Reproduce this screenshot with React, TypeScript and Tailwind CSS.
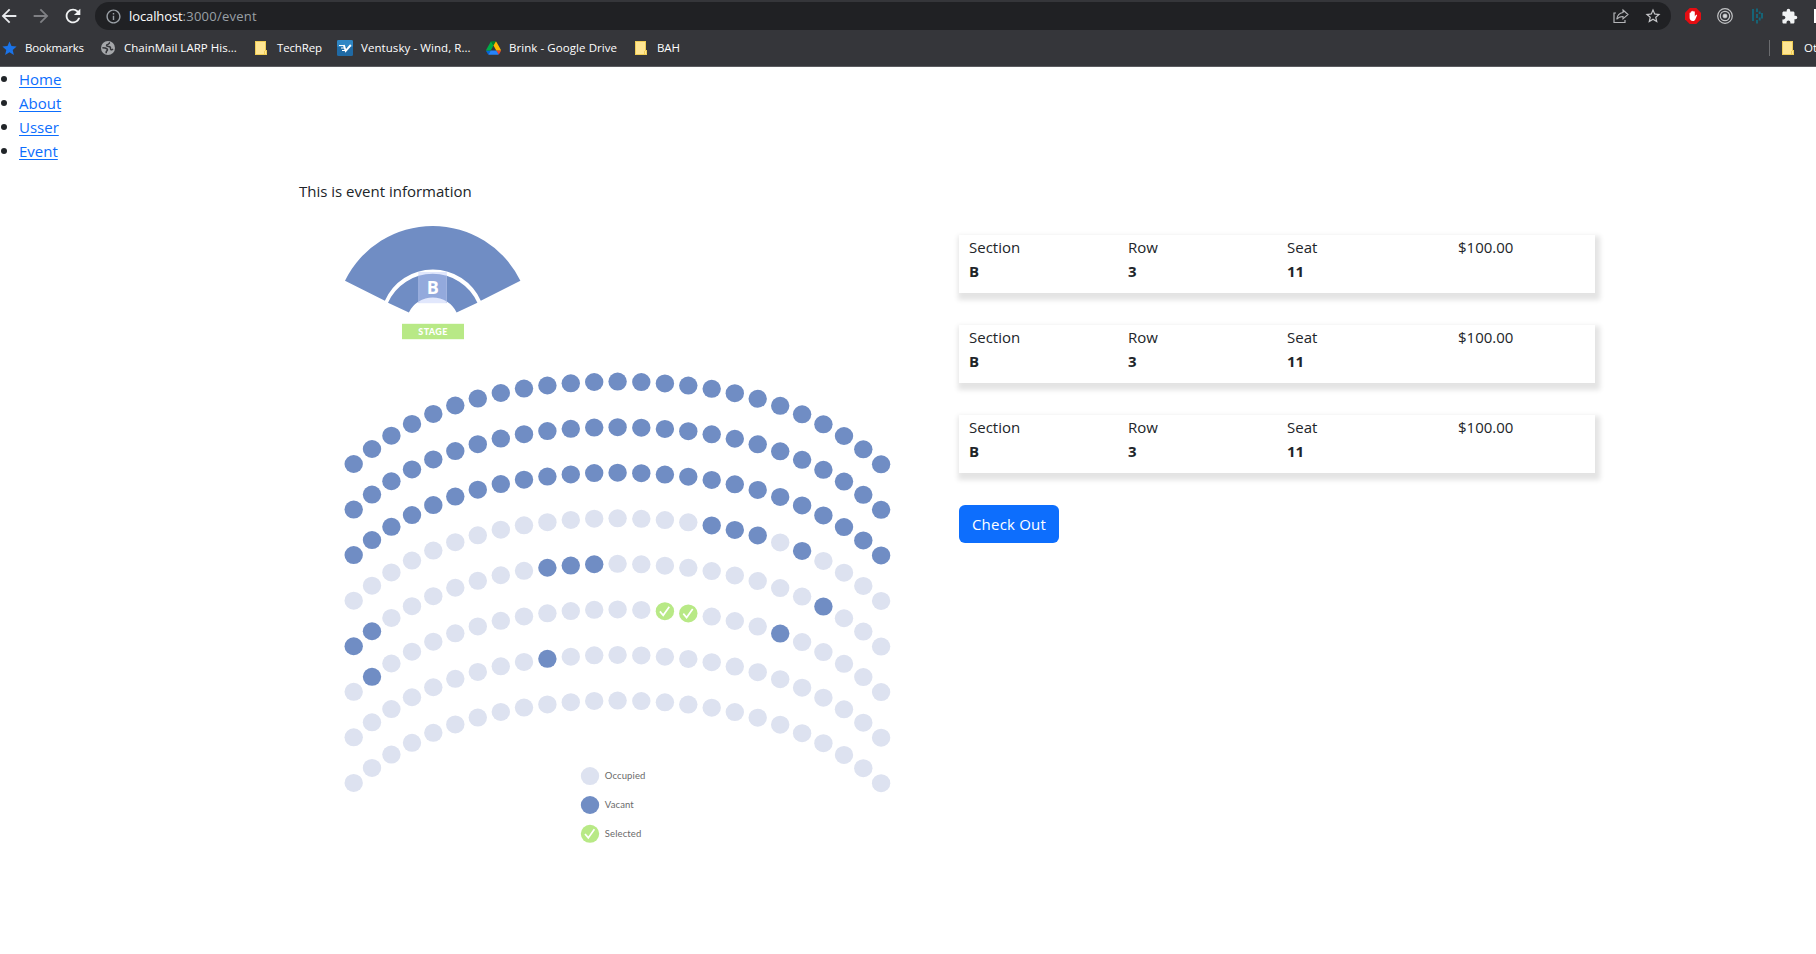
import React from "react";
import {
  MdArrowBack,
  MdArrowForward,
  MdExtension,
  MdInfoOutline,
  MdRefresh,
  MdStar,
  MdStarBorder,
} from "react-icons/md";

type SeatState = "occupied" | "vacant" | "selected";

const SEAT_X = [
  353.7, 372, 391.4, 412, 433.3, 455.3, 477.8, 500.8, 524, 547.4, 570.8, 594.2, 617.6, 641.3, 664.9,
  688.3, 711.7, 734.8, 757.7, 780.2, 802.1, 823.4, 844, 863.3, 881.1,
];
const SEAT_Y = [
  464, 449, 435.7, 423.9, 413.9, 405.5, 398.6, 393, 388.6, 385.5, 383.3, 382, 381.6, 382.1, 383.4,
  385.6, 388.8, 393.2, 398.8, 405.8, 414.3, 424.3, 436, 449.3, 464.3,
];
const ROW_STEP = 45.56;
const VACANT: Record<number, number[]> = {
  3: [16, 17, 18, 20],
  4: [0, 1, 9, 10, 11, 21],
  5: [1, 19],
  6: [9],
};
const SELECTED: Record<number, number[]> = { 5: [14, 15] };
const FILL: Record<SeatState, string> = {
  occupied: "#dde2f0",
  vacant: "#708dc4",
  selected: "#b8e986",
};

function seatState(row: number, seat: number): SeatState {
  if (row < 3 || VACANT[row]?.includes(seat)) return "vacant";
  return SELECTED[row]?.includes(seat) ? "selected" : "occupied";
}

function Seat({ x, y, state }: { x: number; y: number; state: SeatState }) {
  return (
    <g transform={`translate(${x} ${y})`}>
      <ellipse rx="9.2" ry="9" fill={FILL[state]} />
      {state === "selected" && (
        <path d="M-5 0.2 L-1.7 4.1 L4.4 -4.5" fill="none" stroke="#fff" strokeWidth="1.7" />
      )}
    </g>
  );
}

function SeatMap() {
  return (
    <svg className="block h-[640px] w-[600px]" viewBox="299 219 600 640">
      <path
        d="M345 280.8 A97.5 97.5 0 0 1 520.4 280.8 L480.8 300.7 A52.4 52.4 0 0 0 384.9 300.7 Z"
        fill="#708dc4"
      />
      <path
        d="M388 302.8 A49 49 0 0 1 477.4 302.8 L456.6 312.5 A26.5 26.5 0 0 0 408.9 312.5 Z"
        fill="#708dc4"
      />
      <rect x="418.3" y="272" width="28.6" height="31.2" fill="rgba(189,203,248,0.455)" />
      <path d="M418.8 275.5V303M446.4 275.5V303" stroke="#b4c2e8" strokeWidth="0.8" opacity="0.7" />
      <text
        x="432.8"
        y="293.6"
        textAnchor="middle"
        fill="#fff"
        className="font-['Open_Sans',sans-serif] text-[18px] font-bold"
      >
        B
      </text>
      <rect x="402" y="323.8" width="62" height="15.4" fill="#b8e986" />
      <text
        x="433"
        y="334.7"
        textAnchor="middle"
        fill="#fff"
        className="font-['Lato',sans-serif] text-[9px] font-black tracking-[0.35px]"
      >
        STAGE
      </text>
      {Array.from({ length: 8 }, (_, row) =>
        SEAT_X.map((x, i) => (
          <Seat key={`${row}-${i}`} x={x} y={SEAT_Y[i] + row * ROW_STEP} state={seatState(row, i)} />
        )),
      )}
      {(
        [
          ["Occupied", "occupied", 776.1],
          ["Vacant", "vacant", 805],
          ["Selected", "selected", 833.8],
        ] as [string, SeatState, number][]
      ).map(([label, state, y]) => (
        <g key={label}>
          <Seat x={590} y={y} state={state} />
          <text
            x="604.8"
            y={y + 3}
            fill="#6a6a6a"
            className="font-['Lato',sans-serif] text-[9.5px] tracking-[0.12px]"
          >
            {label}
          </text>
        </g>
      ))}
    </svg>
  );
}

function Folder() {
  return (
    <svg className="h-[14px] w-[12px] shrink-0" viewBox="0 0 12 14">
      <path d="M0 0h11v9h1v5H0z" fill="#f0cd55" />
      <path d="M1 1h9v9h-1v3H1z" fill="#ffe693" />
      <path d="M10 10h1v3h-1z" fill="#ffe693" />
    </svg>
  );
}

function Globe() {
  return (
    <svg className="ml-px size-[14px] shrink-0" viewBox="0 0 14 14">
      <circle cx="7" cy="7" r="7" fill="#a5a7aa" />
      <path
        d="M9 1.800C7.800 2 8 3.300 6.600 3.500 5.300 3.700 5.300 4.700 6.200 5.200 7.200 5.700 8.600 5.200 9.300 6.200c.5 1-.2 1.600.500 2.300.6.600 1.600.300 2.200-.400"
        fill="none"
        stroke="#35363a"
        strokeWidth="1.500"
      />
      <path
        d="M1.400 6.800c1.800 0 3.600.2 4.600 1.100.9.900.3 1.700-.300 2.100-.700.500-.500 1.300-.500 2.200"
        fill="none"
        stroke="#35363a"
        strokeWidth="1.600"
      />
    </svg>
  );
}

function Toolbar() {
  return (
    <div className="flex h-[32px] items-start overflow-hidden">
      <div className="flex h-[32px] shrink-0 items-center">
        <MdArrowBack className="-ml-[2px] size-[22px] text-[#e8eaed]" />
        <MdArrowForward className="ml-[10px] size-[22px] text-[#7f8084]" />
        <MdRefresh className="ml-[10px] size-[22px] text-[#f1f3f4]" />
      </div>
      <div className="mt-[2px] ml-[11px] flex h-[28px] w-[1576px] shrink-0 items-center rounded-full bg-[#202124]">
        <MdInfoOutline className="ml-[10px] size-[17px] text-[#9aa0a6]" />
        <span className="ml-[7px] font-['Open_Sans',sans-serif] text-[13px] tracking-[-0.1px] text-white">
          localhost<span className="tracking-[0.25px] text-[#9aa0a6]">:3000/event</span>
        </span>
        <svg className="ml-auto size-[16px] text-[#b4b5b8]" viewBox="0 0 16 16" fill="none" stroke="currentColor">
          <path d="M3 5H1v9.5h11V12" strokeWidth="1.2" />
          <path d="M10 2l5 4.500-5 4.300V8.500C7 8.500 5 9.500 3.700 11.300 4.200 7.500 6.400 5 10 4.500z" strokeWidth="1.1" />
        </svg>
        <MdStarBorder className="mr-[9px] ml-[15px] size-[18px] text-[#c6c7ca]" />
      </div>
      <div className="flex h-[32px] shrink-0 items-center">
        <svg className="ml-[14px] size-[16px]" viewBox="0 0 16 16">
          <path d="M4.700 0h6.600L16 4.700v6.600L11.300 16H4.700L0 11.300V4.700z" fill="#e40d12" />
          <path
            d="M4.600 8.300V5.300c0-1 1.200-1 1.200 0V4c0-1 1.300-1 1.300 0v-.500c0-1 1.400-1 1.400 0V4c0-1 1.300-1 1.300 0v4.500l1-1.400c.6-.7 1.500-.2 1.200.5l-1.600 3.600c-.5 1.200-1.200 1.800-2.400 1.800-2.300 0-3.400-1.200-3.400-3.200z"
            fill="#fff"
          />
        </svg>
        <svg className="ml-[16px] size-[16px]" viewBox="0 0 16 16" fill="none" stroke="#c3c4c6">
          <circle cx="8" cy="8" r="7.300" strokeWidth="1.200" />
          <circle cx="8" cy="8" r="4.700" strokeWidth="1.200" />
          <circle cx="8" cy="8" r="2.100" fill="#d5d6d8" strokeWidth="0.600" />
        </svg>
        <svg className="ml-[19px] h-[16px] w-[11px]" viewBox="0 0 11 16" fill="none" stroke="#15677a" strokeWidth="1.900">
          <path d="M1 1v12M5 0.500v3.500M5 6v4M5 12v3.500M7.700 3.500v2.500M7.700 9.500v3M10 5v5.500" />
        </svg>
        <MdExtension className="ml-[18px] size-[17px] text-[#f1f3f4]" />
        <span className="ml-[16px] h-[14px] w-[6px] bg-white" />
      </div>
    </div>
  );
}

function Bookmarks() {
  return (
    <div className="flex h-[32px] items-center overflow-hidden font-['Open_Sans',sans-serif] text-[11.5px] whitespace-nowrap text-white">
      <MdStar className="ml-[1px] size-[17px] shrink-0 text-[#1a73e8]" />
      <span className="ml-[7px] w-[75px] shrink-0 tracking-[-0.2px]">Bookmarks</span>
      <Globe />
      <span className="ml-[9px] w-[131px] shrink-0 tracking-[0.02px]">ChainMail LARP His...</span>
      <Folder />
      <span className="ml-[10px] w-[60px] shrink-0 tracking-[-0.15px]">TechRep</span>
      <svg className="size-[16px] shrink-0" viewBox="0 0 16 16">
        <rect width="16" height="16" rx="1.500" fill="#1f6aa5" />
        <rect width="16" height="7" rx="1.500" fill="#2f86c4" />
        <path d="M2 5.500h5M4 8h3M5 10.500h3" stroke="#fff" strokeWidth="1.200" />
        <path d="M6.800 5l1.900 5.800L13.800 5" fill="none" stroke="#fff" strokeWidth="1.900" />
      </svg>
      <span className="ml-[8px] w-[125px] shrink-0 tracking-[0.07px]">Ventusky - Wind, R...</span>
      <svg className="h-[14px] w-[15px] shrink-0" viewBox="0 0 87.3 78">
        <path d="m6.600 66.850 3.850 6.650c.8 1.400 1.950 2.500 3.300 3.300l13.750-23.800h-27.500c0 1.550.4 3.100 1.200 4.500z" fill="#0066da" />
        <path d="m43.650 25-13.750-23.800c-1.350.8-2.500 1.900-3.300 3.300l-25.400 44a9.060 9.060 0 0 0 -1.200 4.500h27.500z" fill="#00ac47" />
        <path d="m73.550 76.800c1.350-.8 2.500-1.900 3.300-3.300l1.600-2.750 7.650-13.250c.8-1.400 1.200-2.950 1.200-4.500h-27.502l5.852 11.500z" fill="#ea4335" />
        <path d="m43.650 25 13.750-23.800c-1.350-.8-2.900-1.200-4.500-1.200h-18.500c-1.600 0-3.150.45-4.500 1.200z" fill="#00832d" />
        <path d="m59.800 53h-32.300l-13.750 23.800c1.350.8 2.900 1.200 4.500 1.200h50.800c1.600 0 3.150-.45 4.500-1.200z" fill="#2684fc" />
        <path d="m73.400 26.500-12.700-22c-.8-1.400-1.950-2.500-3.300-3.300l-13.750 23.800 16.150 28h27.450c0-1.550-.4-3.100-1.200-4.500z" fill="#ffba00" />
      </svg>
      <span className="ml-[8px] w-[126px] shrink-0 tracking-[0.07px]">Brink - Google Drive</span>
      <Folder />
      <span className="ml-[10px] w-[60px] shrink-0 tracking-[-0.15px]">BAH</span>
      <div className="ml-auto flex w-[47px] shrink-0 items-center overflow-hidden">
        <span className="h-[16px] w-px shrink-0 bg-[#6b6c6f]" />
        <span className="w-[12px] shrink-0" />
        <Folder />
        <span className="ml-[10px]">Oth</span>
      </div>
    </div>
  );
}

function TicketCard() {
  return (
    <div className="grid h-[58px] w-[636px] grid-cols-4 bg-white leading-6 shadow-[2px_4px_5px_3px_rgba(0,0,0,0.11)]">
      {[
        ["Section", "B"],
        ["Row", "3"],
        ["Seat", "11"],
      ].map(([label, value]) => (
        <div key={label} className="pl-[10px]">
          <div>{label}</div>
          <div className="font-bold">{value}</div>
        </div>
      ))}
      <div className="pl-[22px]">$100.00</div>
    </div>
  );
}

export default function App() {
  return (
    <div className="h-[954px] w-[1816px] overflow-hidden bg-white font-['Open_Sans',sans-serif] text-[15px] leading-6 text-[#212529]">
      <header className="h-[67px] border-b border-[#5b5c60] bg-[#35363a]">
        <Toolbar />
        <Bookmarks />
      </header>
      <ul className="mb-4">
        {["Home", "About", "Usser", "Event"].map((item) => (
          <li key={item} className="flex items-center">
            <span className="ml-[1px] size-[6px] rounded-full bg-[#212529]" />
            <a href="#" className="ml-[12px] text-[#0d6efd] underline decoration-1 underline-offset-2">
              {item}
            </a>
          </li>
        ))}
      </ul>
      <main className="ml-[299px]">
        <p className="mb-4">This is event information</p>
        <div className="flex">
          <SeatMap />
          <div className="mt-4 ml-[60px] flex flex-col items-start gap-8">
            <TicketCard />
            <TicketCard />
            <TicketCard />
            <button className="h-[38px] w-[100px] rounded-md bg-[#0d6efd] tracking-[0.2px] text-white">
              Check Out
            </button>
          </div>
        </div>
      </main>
    </div>
  );
}
